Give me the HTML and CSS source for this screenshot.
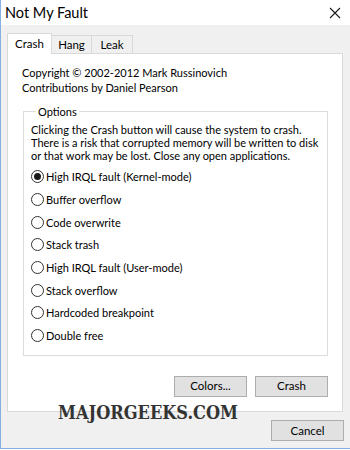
FILE: index.html
```html
<!DOCTYPE html>
<html>
<head>
<meta charset="utf-8">
<link rel="stylesheet" href="styles.css">
</head>
<body>
<div class="window">
  <div class="titlebar">
    <span class="title">Not My Fault</span>
    <svg class="close" width="12" height="12" viewBox="0 0 12 12"><path d="M1 1 L11 11 M11 1 L1 11" stroke="#1a1a1a" stroke-width="1.1" fill="none"/></svg>
  </div>
  <div class="client">
    <div class="tabs">
      <div class="tab active">Crash</div>
      <div class="tab">Hang</div>
      <div class="tab">Leak</div>
    </div>
    <div class="panel">
      <div class="about">
        <div>Copyright © 2002-2012 Mark Russinovich</div>
        <div>Contributions by Daniel Pearson</div>
      </div>
      <fieldset class="options">
        <legend>Options</legend>
        <p class="desc">Clicking the Crash button will cause the system to crash.<br>There is a risk that corrupted memory will be written to disk<br>or that work may be lost. Close any open applications.</p>
        <div class="radios">
          <div class="radio checked"><span class="dot"></span>High IRQL fault (Kernel-mode)</div>
          <div class="radio"><span class="dot"></span>Buffer overflow</div>
          <div class="radio"><span class="dot"></span>Code overwrite</div>
          <div class="radio"><span class="dot"></span>Stack trash</div>
          <div class="radio"><span class="dot"></span>High IRQL fault (User-mode)</div>
          <div class="radio"><span class="dot"></span>Stack overflow</div>
          <div class="radio"><span class="dot"></span>Hardcoded breakpoint</div>
          <div class="radio"><span class="dot"></span>Double free</div>
        </div>
      </fieldset>
      <div class="actions">
        <button class="btn">Colors...</button>
        <button class="btn">Crash</button>
      </div>
    </div>
    <div class="footer">
      <button class="btn">Cancel</button>
    </div>
    <div class="watermark">MAJORGEEKS.COM</div>
  </div>
</div>
</body>
</html>
```
FILE: styles.css
```css
html, body {
  margin: 0;
  padding: 0;
  background: #ffffff;
}
body {
  width: 350px;
  height: 450px;
  overflow: hidden;
  font-family: Lato, "Noto Sans", sans-serif;
  font-size: 11px;
  color: #000;
}
.window {
  width: 350px;
  height: 449px;
  border-left: 1px solid #83b2e2;
  border-bottom: 1px solid #83b2e2;
  box-sizing: border-box;
  display: flex;
  flex-direction: column;
  background: #f0f0f0;
}
.titlebar {
  height: 25px;
  background: #ffffff;
  display: flex;
  align-items: center;
  justify-content: space-between;
  padding: 0 9px 0 4px;
  flex: none;
}
.title {
  font-size: 14.5px;
  color: #000;
}
.client {
  position: relative;
  flex: 1;
  min-width: 0;
  padding: 8px 7px 0 6px;
  display: flex;
  flex-direction: column;
}
.tabs {
  display: flex;
  align-items: flex-end;
  height: 20px;
}
.tab {
  height: 18px;
  line-height: 18px;
  border: 1px solid #d9d9d9;
  border-bottom: none;
  border-left: none;
  box-sizing: border-box;
  background: #f0f0f0;
  color: #000;
  text-align: center;
  font-size: 11.5px;
}
.tab.active {
  height: 21px;
  line-height: 20px;
  background: #ffffff;
  border-left: 1px solid #d9d9d9;
  margin-bottom: -1px;
  position: relative;
  z-index: 1;
  width: 45px;
}
.tab:nth-child(2) { width: 40px; }
.tab:nth-child(3) { width: 41px; }
.panel {
  height: 359px;
  min-width: 0;
  box-sizing: border-box;
  border: 1px solid #d9d9d9;
  background: #ffffff;
  padding: 11px 14px 0 14px;
  display: flex;
  flex-direction: column;
}
.about {
  line-height: 15px;
}
.options {
  margin: 9px 0 0 1px;
  width: 305px;
  min-width: 0;
  height: 252px;
  box-sizing: border-box;
  border: 1px solid #dcdcdc;
  padding: 0 7px;
}
.options legend {
  padding: 0 2px;
  margin-left: 5px;
  line-height: 15px;
}
.desc {
  margin: 4px 0 0 0;
  line-height: 13px;
  white-space: nowrap;
}
.radios {
  margin-top: 3.5px;
  display: flex;
  flex-direction: column;
}
.radio {
  height: 22.7px;
  display: flex;
  align-items: center;
  white-space: nowrap;
}
.dot {
  width: 13px;
  height: 13px;
  border: 1px solid #333333;
  border-radius: 50%;
  box-sizing: border-box;
  background: #ffffff;
  margin-right: 2px;
  display: flex;
  align-items: center;
  justify-content: center;
  flex: none;
}
.radio.checked .dot::after {
  content: "";
  width: 7px;
  height: 7px;
  border-radius: 50%;
  background: #1a1a1a;
}
.actions {
  display: flex;
  justify-content: flex-end;
  gap: 8px;
  margin-top: 19.5px;
}
.btn {
  width: 73px;
  height: 21px;
  box-sizing: border-box;
  background: #e1e1e1;
  border: 1px solid #adadad;
  font-family: inherit;
  font-size: 11.5px;
  color: #000;
  padding: 0;
  line-height: 18px;
}
.footer {
  display: flex;
  justify-content: flex-end;
  margin-top: 8px;
  margin-right: -1px;
}
.watermark {
  position: absolute;
  left: 57px;
  top: 377px;
  font-family: "DejaVu Serif Condensed", "DejaVu Serif", serif;
  font-stretch: condensed;
  font-weight: bold;
  font-size: 18px;
  letter-spacing: 0;
  color: #333333;
}
```
